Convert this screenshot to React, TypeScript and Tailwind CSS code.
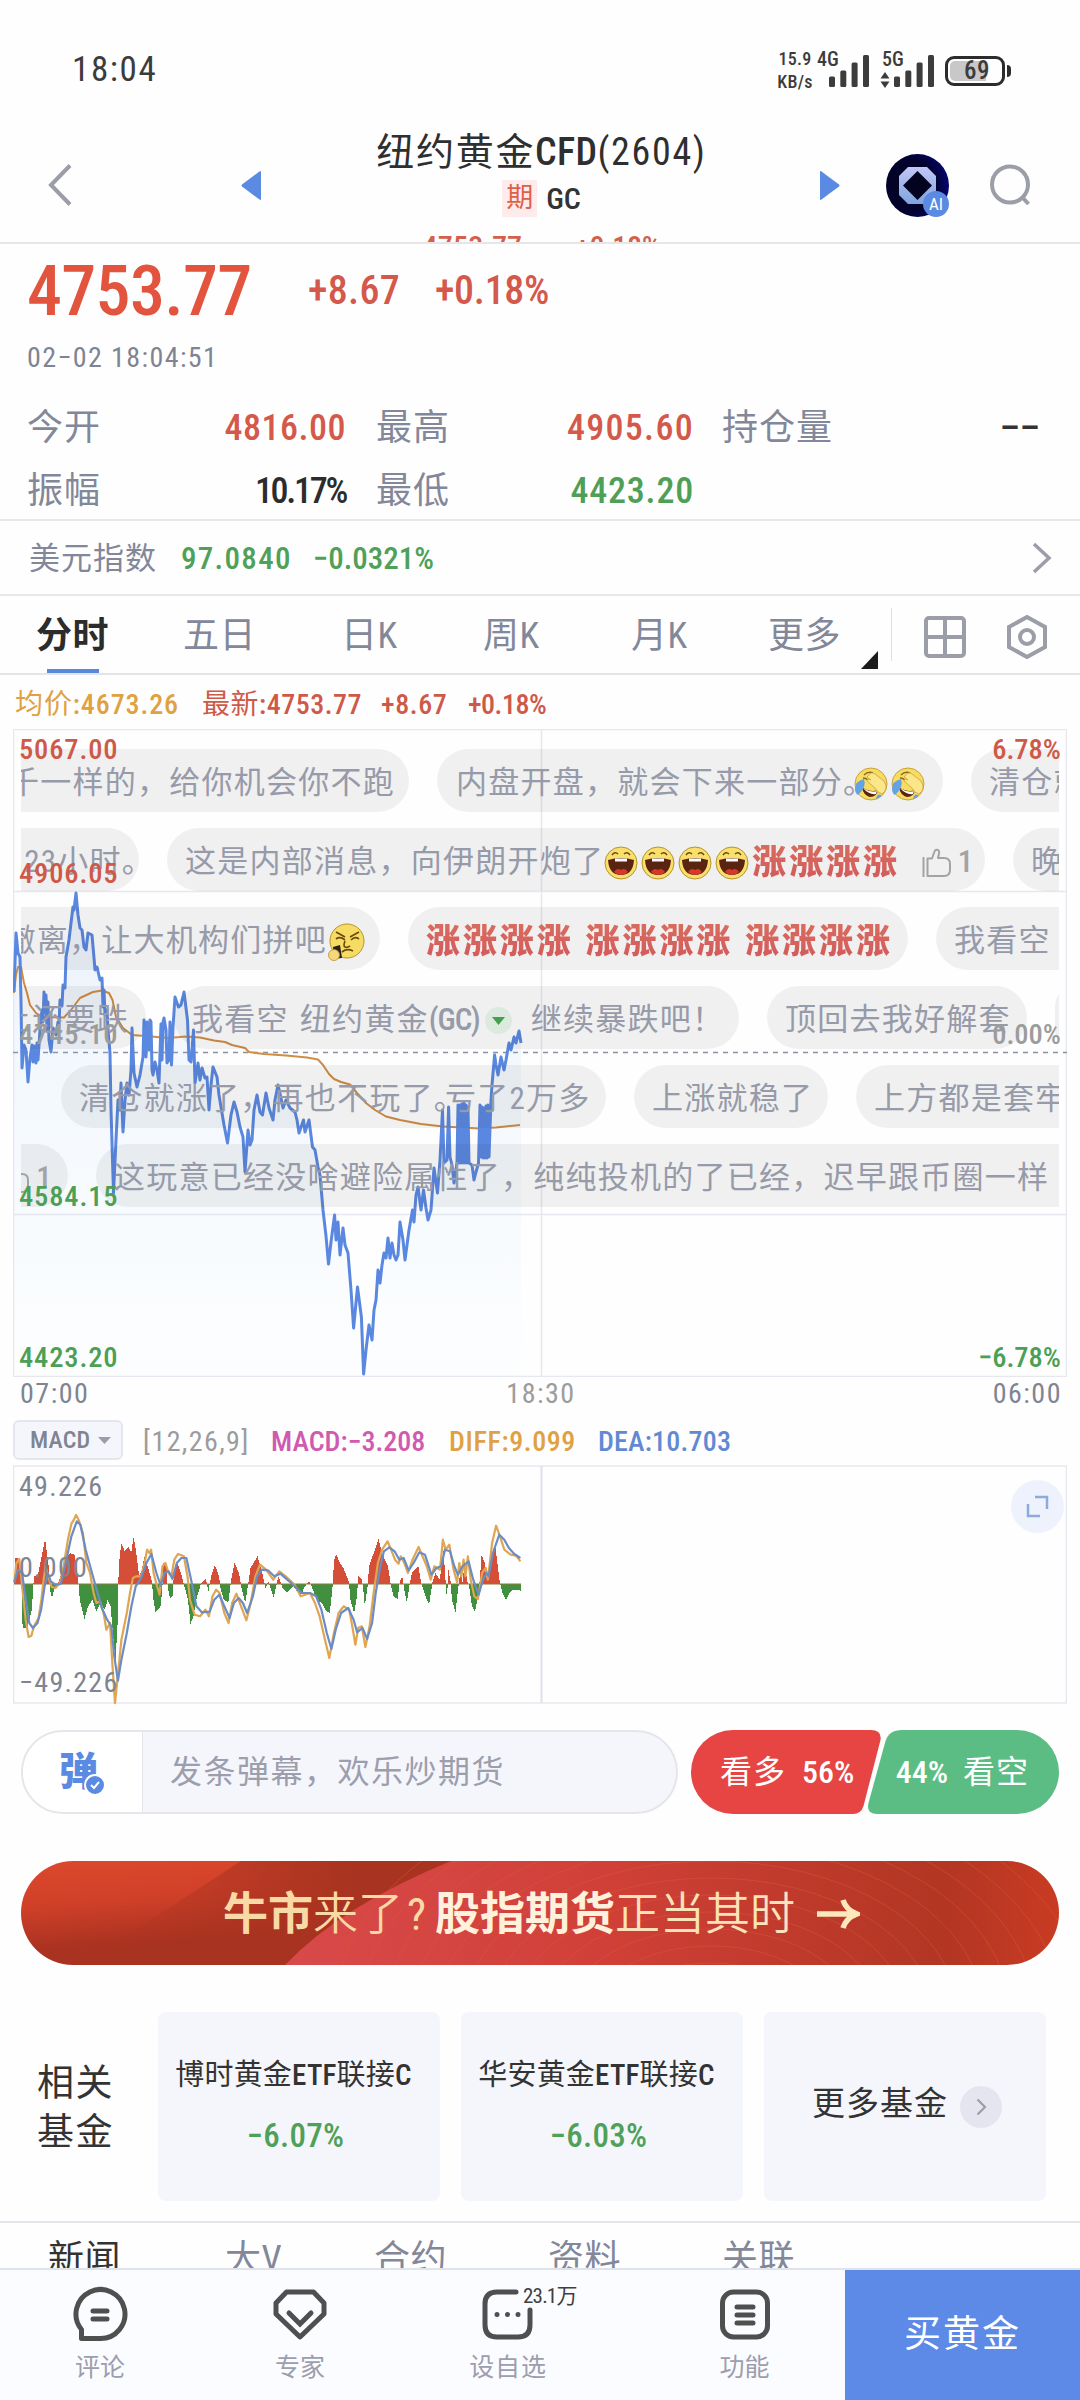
import { Fragment, type ReactNode } from 'react';
import clsx from 'clsx';

type Point = [number, number];

const PRICE_POINTS: Point[] = [
  [14, 992], [16, 933], [18, 953], [20, 957], [21, 1003], [22, 1068], [24, 1045], [26, 1050], [28, 1082], [30, 1058],
  [32, 1045], [33, 1062], [34, 1046], [36, 1063], [37, 1043], [38, 1060], [40, 1030], [42, 1010], [43, 1022], [44, 992],
  [45, 1012], [46, 995], [47, 1030], [48, 1002], [49, 1040], [51, 1052], [53, 1028], [56, 1035], [58, 1022], [59, 1025],
  [60, 1000], [62, 1006], [63, 985], [65, 988], [66, 957], [69, 940], [71, 923], [73, 907], [74, 910], [76, 893],
  [78, 915], [80, 928], [82, 930], [84, 947], [86, 950], [88, 933], [92, 935], [94, 958], [95, 970], [97, 967],
  [100, 980], [102, 978], [103, 1007], [104, 990], [105, 1015], [107, 1010], [108, 1030], [110, 1053], [111, 1110],
  [113.5, 1193], [116, 1140], [118, 1100], [120, 1110], [121, 1083], [123, 1132], [125, 1100], [127, 1083],
  [129, 1095], [131, 1070], [132, 1028], [134, 1073], [137, 1087], [140, 1075], [143, 1057], [144, 1020], [146, 1057],
  [147, 1022], [149, 1050], [150, 1020], [151, 1022], [152, 1070], [153, 1075], [155, 1062], [157, 1070], [159, 1083],
  [161, 1024], [162, 1060], [163, 1022], [164, 1018], [166, 1030], [167, 1063], [169, 1060], [170, 1022], [171.5, 1065],
  [173, 1027], [175, 997], [177, 1003], [178.5, 1007], [181, 1005], [184, 992], [186, 1008], [187.5, 1020], [189, 1060],
  [191, 1062], [193.5, 1030], [195, 1083], [198, 1063], [200, 1080], [202, 1068], [205, 1078], [207, 1077],
  [209, 1110], [211, 1085], [213, 1067], [217, 1077], [219, 1095], [221, 1107], [224, 1125], [227.5, 1143], [231, 1115],
  [234, 1102], [237, 1112], [240, 1127], [243, 1137], [245, 1172], [248, 1130], [250, 1145], [252, 1140], [254, 1110],
  [257, 1095], [260, 1112], [262.5, 1115], [266, 1093], [269, 1108], [273, 1120], [275, 1100], [278, 1085],
  [281, 1098], [283, 1108], [286, 1100], [290, 1108], [295, 1112], [297, 1120], [299, 1133], [303.5, 1120], [305, 1132],
  [309, 1120], [312.5, 1147], [315, 1150], [318, 1167], [320, 1175], [323, 1210], [326, 1236], [328.5, 1264],
  [331, 1242], [334.6, 1215], [336, 1240], [338, 1222], [340, 1255], [343, 1228], [345, 1245], [348, 1253],
  [351, 1290], [353.6, 1328], [357.5, 1287], [361.4, 1317], [363.6, 1374], [366, 1350], [369, 1325], [372, 1340],
  [374, 1310], [376, 1300], [378, 1270], [380, 1283], [382, 1265], [384, 1253], [386, 1258], [388, 1238], [390, 1258],
  [392, 1243], [394, 1255], [396, 1260], [398, 1255], [400, 1222], [403, 1240], [405, 1260], [409, 1230], [412.5, 1210],
  [414, 1222], [416, 1195], [418, 1187], [421, 1210], [423.5, 1190], [426, 1208], [428, 1220], [431, 1210], [434, 1168],
  [437.5, 1193], [440, 1160], [442.5, 1110], [444, 1163], [447, 1160], [448.6, 1107], [450, 1157], [452, 1165],
  [454, 1183], [457, 1163], [458, 1105], [459, 1163], [460, 1105], [461, 1163], [462, 1104], [463, 1163], [464, 1103],
  [465, 1163], [466, 1105], [467, 1163], [468, 1107], [469, 1163], [472, 1165], [474, 1180], [476, 1172],
  [478.5, 1163], [480, 1105], [481, 1157], [482, 1107], [483, 1158], [484, 1108], [485, 1158], [486, 1106],
  [487, 1158], [488, 1105], [489, 1157], [491, 1100], [492, 1085], [494.6, 1055], [496, 1065], [498, 1075], [501, 1057],
  [504, 1070], [506, 1060], [509, 1043], [511, 1050], [514, 1037], [516, 1043], [519, 1031], [521, 1043],
];

const AVERAGE_POINTS: Point[] = [
  [14, 993], [16, 975], [18, 967], [21, 967], [24, 983], [27, 993], [30, 1005], [36, 1013], [43, 1017], [64, 1017.5],
  [71, 1010], [80, 998], [93, 992], [102, 990.5], [109, 993], [112.5, 1000], [116, 1017], [123, 1028], [132, 1035],
  [146, 1036], [168, 1038], [186, 1036.5], [200, 1037.5], [214, 1040.5], [225, 1042], [232, 1045], [245, 1048],
  [249, 1052], [264, 1054], [286, 1055.5], [307, 1057.5], [318, 1059.5], [323, 1065], [329, 1074], [334, 1079],
  [341, 1082], [350, 1084.5], [357, 1093], [366, 1103], [375, 1110], [386, 1116.5], [400, 1120], [421, 1124],
  [443, 1126.5], [479, 1128.5], [496, 1127.5], [520, 1125],
];

// MACD series use a denser grid than the screen: 2.8 units per px across, 3 per px down
const DIFF_POINTS: Point[] = [
  [40, 548], [46, 490], [54, 478], [62, 560], [72, 660], [80, 712], [88, 708], [95, 680], [108, 655], [116, 600],
  [122, 540], [128, 500], [134, 530], [145, 562], [155, 565], [168, 550], [178, 500], [190, 420], [200, 372], [207, 360],
  [213, 346], [220, 360], [232, 400], [242, 490], [252, 520], [262, 580], [270, 610], [280, 605], [290, 640], [298, 690],
  [308, 670], [314, 780], [322, 910], [328, 850], [340, 720], [355, 640], [364, 580], [372, 535], [382, 530], [395, 530],
  [405, 490], [412, 450], [418, 460], [423, 450], [430, 520], [440, 560], [447, 585], [455, 500], [463, 490], [472, 520],
  [480, 530], [488, 480], [498, 463], [515, 470], [525, 530], [532, 600], [545, 645], [560, 650], [575, 630], [585, 650],
  [595, 590], [605, 570], [615, 580], [628, 640], [640, 670], [650, 610], [662, 582], [675, 620], [690, 662], [702, 610],
  [715, 530], [728, 495], [745, 510], [765, 540], [782, 515], [800, 530], [825, 555], [842, 590], [868, 580], [882, 610],
  [895, 650], [910, 720], [922, 775], [935, 700], [948, 640], [962, 620], [978, 630], [988, 690], [995, 735], [1003, 685],
  [1013, 680], [1023, 742], [1035, 680], [1046, 580], [1058, 490], [1070, 450], [1085, 425], [1095, 450], [1106, 480],
  [1116, 492], [1122, 470], [1132, 490], [1142, 520], [1155, 480], [1172, 442], [1183, 470], [1195, 500], [1206, 540],
  [1216, 500], [1232, 510], [1240, 420], [1248, 450], [1258, 435], [1270, 510], [1280, 548], [1286, 490], [1292, 530],
  [1298, 480], [1303, 530], [1310, 470], [1318, 540], [1328, 590], [1338, 598], [1350, 520], [1360, 505], [1366, 540],
  [1378, 430], [1389, 378], [1400, 410], [1412, 450], [1430, 465], [1445, 468], [1457, 485],
];

const DEA_POINTS: Point[] = [
  [40, 548], [50, 510], [62, 520], [72, 600], [82, 670], [92, 685], [105, 670], [115, 630], [125, 560], [134, 520],
  [142, 545], [155, 555], [170, 553], [182, 500], [200, 410], [215, 365], [225, 375], [240, 450], [255, 510], [268, 560],
  [285, 625], [300, 660], [312, 680], [320, 770], [330, 843], [340, 780], [355, 700], [368, 620], [380, 560], [395, 535],
  [410, 490], [424, 463], [438, 520], [450, 558], [460, 520], [472, 515], [483, 538], [495, 490], [508, 475], [522, 475],
  [535, 540], [550, 620], [565, 638], [587, 636], [600, 600], [614, 585], [628, 620], [643, 655], [655, 610], [668, 595],
  [680, 610], [692, 640], [708, 590], [720, 530], [733, 510], [750, 512], [768, 530], [785, 522], [810, 545], [845, 580],
  [868, 580], [885, 590], [900, 630], [915, 700], [928, 748], [940, 690], [955, 640], [975, 625], [990, 660], [1000, 698],
  [1015, 685], [1028, 718], [1042, 670], [1052, 580], [1065, 500], [1075, 455], [1090, 443], [1105, 455], [1118, 480],
  [1130, 475], [1144, 512], [1158, 490], [1174, 458], [1190, 465], [1208, 525], [1222, 505], [1235, 500], [1246, 450],
  [1260, 455], [1272, 500], [1282, 525], [1295, 500], [1312, 485], [1325, 540], [1340, 585], [1352, 540], [1362, 520],
  [1368, 530], [1380, 460], [1398, 405], [1412, 420], [1425, 445], [1440, 463], [1457, 475],
];

const HISTOGRAM: Point[] = [
  [38, 540], [42, 475], [50, 475], [57, 520], [59, 553], [62, 685], [75, 685], [88, 630], [92, 553], [94, 530], [105, 525],
  [115, 470], [125, 418], [135, 500], [138, 570], [144, 595], [150, 570], [160, 555], [168, 530], [180, 480], [195, 460],
  [208, 465], [218, 550], [222, 600], [235, 658], [245, 620], [258, 600], [268, 635], [280, 610], [292, 630], [300, 600],
  [308, 620], [315, 700], [322, 785], [328, 670], [331, 500], [338, 430], [348, 455], [358, 440], [366, 460], [373, 410],
  [380, 460], [388, 530], [396, 510], [403, 470], [412, 500], [424, 545], [428, 600], [434, 638], [448, 620], [453, 570],
  [456, 490], [465, 500], [468, 560], [475, 597], [482, 590], [485, 530], [495, 490], [508, 530], [515, 560], [525, 600],
  [532, 672], [540, 650], [548, 600], [562, 550], [575, 538], [582, 575], [590, 530], [600, 495], [612, 530], [615, 560],
  [625, 600], [638, 608], [645, 545], [655, 490], [668, 520], [674, 560], [685, 610], [694, 550], [700, 505], [720, 470],
  [735, 530], [742, 565], [750, 545], [765, 593], [778, 530], [790, 565], [802, 578], [820, 560], [840, 590], [852, 560],
  [865, 545], [875, 570], [885, 600], [900, 610], [912, 635], [922, 640], [930, 560], [934, 480], [940, 463], [950, 490],
  [960, 505], [975, 545], [980, 600], [990, 642], [998, 590], [1002, 530], [1010, 535], [1015, 560], [1020, 620],
  [1028, 560], [1032, 500], [1045, 460], [1058, 418], [1068, 460], [1085, 500], [1092, 550], [1100, 590], [1112, 597],
  [1118, 545], [1125, 530], [1132, 580], [1138, 608], [1146, 550], [1152, 520], [1170, 500], [1178, 550], [1190, 590],
  [1200, 615], [1210, 545], [1218, 520], [1230, 540], [1240, 450], [1250, 600], [1254, 510], [1260, 545], [1264, 600],
  [1274, 638], [1282, 560], [1288, 510], [1294, 550], [1300, 480], [1306, 540], [1312, 560], [1320, 620], [1328, 637],
  [1337, 590], [1342, 540], [1347, 465], [1356, 490], [1362, 540], [1375, 470], [1386, 445], [1397, 540], [1405, 580],
  [1415, 600], [1425, 580], [1435, 570], [1458, 573],
];

const ZERO = 553;
const toPolyline = (points: Point[]) => points.map(([x, y]) => `${x},${y}`).join(' ');
const toScreen = (points: Point[]): Point[] =>
  points.map(([x, y]) => [Number((x / 2.8 - 13).toFixed(1)), Number(((y - 196) / 3).toFixed(1))]);

// One bar per pixel column, split by sign
const histogramBars = (sign: 'up' | 'down') => {
  const points = toScreen(HISTOGRAM);
  const zero = (ZERO - 196) / 3;
  const bars: string[] = [];
  for (let i = 0; i < points.length - 1; i++) {
    const [x0, y0] = points[i];
    const [x1, y1] = points[i + 1];
    for (let x = Math.ceil(x0); x < x1; x++) {
      const y = y0 + ((y1 - y0) * (x - x0)) / (x1 - x0);
      if (sign === 'up' ? y < zero : y > zero) {
        bars.push(`M${x + 0.5} ${zero}V${Math.round(y)}`);
      }
    }
  }
  return bars.join('');
};

function SignalBars() {
  return (
    <svg className="h-8 w-10" viewBox="0 0 40 32" fill="#3c3c3c">
      <rect x="0" y="21.5" width="6" height="10.5" rx="1.5" />
      <rect x="11.3" y="15.5" width="6" height="16.5" rx="1.5" />
      <rect x="22.6" y="7.5" width="6" height="24.5" rx="1.5" />
      <rect x="34" y="0" width="6" height="32" rx="1.5" />
    </svg>
  );
}

function StatusBar() {
  return (
    <div className="flex h-[128px] items-center justify-between pt-[13px] pr-[69px] pl-[72px] text-[#3c3c3c]">
      <span className="text-[35px] tracking-[1.6px]">18:04</span>
      <div className="flex items-center">
        <div className="flex w-[34px] flex-col items-center text-[18px] leading-[22.5px] font-medium">
          <span className="tracking-[0.3px]">15.9</span>
          <span className="tracking-[0.3px]">KB/s</span>
        </div>
        <div className="relative ml-[17px]">
          <span className="absolute -top-[6px] -left-[12px] text-[20px] leading-5 font-medium">4G</span>
          <SignalBars />
        </div>
        <div className="relative ml-[25px]">
          <span className="absolute -top-[6px] -left-[12px] text-[20px] leading-5 font-medium">5G</span>
          <svg className="absolute top-[17px] -left-[14px] h-4 w-[10px]" viewBox="0 0 10 16" fill="#3c3c3c">
            <path d="M5 0 9.5 6.5H.5zM5 16 .5 9.5h9z" />
          </svg>
          <SignalBars />
        </div>
        <div className="relative ml-[11px] flex h-[30px] w-[60px] items-center justify-center rounded-[9px] border-[3px] border-[#2c2c2c] p-[2px]">
          <div className="absolute top-[2px] left-[2px] h-5 w-[36px] rounded-l-[5px] bg-[#c8c8c8]" />
          <span className="relative pl-1 text-[25px] leading-6 font-medium tracking-[0.5px]">69</span>
        </div>
        <div className="ml-[2px] h-[12px] w-1 rounded-r-full bg-[#2c2c2c]" />
      </div>
    </div>
  );
}

function Header() {
  return (
    <div className="flex h-[116px] items-center overflow-hidden border-b-2 border-[#e6e6e8] pr-[48px]">
      <svg className="ml-[48px] h-[42px] w-[24px] shrink-0" viewBox="0 0 24 42" fill="none" stroke="#9b9da7" strokeWidth="4">
        <path d="M22 1.5 3 21l19 19.5" />
      </svg>
      <svg className="ml-[169px] h-[29px] w-[20px] shrink-0" viewBox="0 0 20 29" fill="#5b8ae2">
        <path d="M20 1v27q0 1.500-1.500.5L1 15.500q-1-1 0-2L18.500.5Q20-.5 20 1z" />
      </svg>
      <div className="flex h-full flex-1 flex-col items-center pl-[2px]">
        <h1 className="h-12 text-[38px] leading-[49px] font-normal tracking-[1.700px] whitespace-nowrap text-[#2f2f2f]">
          纽约黄金<span className="font-medium tracking-[0.3px]">CFD</span>(2604)
        </h1>
        <div className="flex h-11 shrink-0 items-center gap-[9px] pt-px">
          <span className="flex h-[37px] w-[35px] items-center justify-center bg-[#fdeceb] text-[27px] text-[#de5f4a]">期</span>
          <span className="text-[30px] font-medium text-[#333]">GC</span>
        </div>
        <div className="flex h-[52px] shrink-0 items-center gap-[53px] text-[30px] font-medium text-[#d3604c]">
          <span className="tracking-[0.2px]">4753.77</span>
          <span className="-tracking-[0.3px]">+0.18%</span>
        </div>
      </div>
      <svg className="h-[29px] w-[20px] shrink-0" viewBox="0 0 20 29" fill="#5b8ae2">
        <path d="M0 1v27q0 1.500 1.500.5L19 15.500q1-1 0-2L1.500.5Q0-.5 0 1z" />
      </svg>
      <div className="relative ml-[46px] h-[63px] w-[63px] shrink-0">
        <svg className="h-full w-full" viewBox="0 0 63 63">
          <defs>
            <radialGradient id="orb" cx="0.35" cy="0.5" r="0.7">
              <stop offset="0" stopColor="#05051f" />
              <stop offset="0.6" stopColor="#02022e" />
              <stop offset="1" stopColor="#06067c" />
            </radialGradient>
            <linearGradient id="gem" x1="0" y1="0" x2="0" y2="1">
              <stop offset="0" stopColor="#c2c6f7" />
              <stop offset="1" stopColor="#7fa4df" />
            </linearGradient>
          </defs>
          <circle cx="31.500" cy="31.500" r="31.500" fill="url(#orb)" />
          <path d="M22 13h19l9 9v19l-9 9H22l-9-9V22z" fill="url(#gem)" />
          <path d="M31.500 17 46 31.500 31.500 46 17 31.500z" fill="#03031f" />
        </svg>
        <span className="absolute right-0 bottom-0 flex h-[26px] w-[26px] items-center justify-center rounded-full bg-[#5b8ae2] text-[17px] leading-4 text-white">
          AI
        </span>
      </div>
      <svg className="ml-[41px] h-[42px] w-[42px] shrink-0" viewBox="0 0 42 42" fill="none" stroke="#9b9da7" strokeWidth="4">
        <circle cx="20" cy="20.500" r="18" />
        <path d="m32 33 6.500 7" />
      </svg>
    </div>
  );
}

function Quote() {
  return (
    <div className="h-[277px] border-b-2 border-[#e8e8ea] pl-[27px] text-[#d4594a]">
      <div className="flex h-[92px] items-center pt-[2px]">
        <span className="w-[281px] text-[70px] leading-[92px] font-medium -tracking-[0.700px] text-[#e3543e]">4753.77</span>
        <span className="w-[127px] text-[40px] font-medium tracking-[0.300px]">+8.67</span>
        <span className="text-[40px] font-medium -tracking-[0.300px]">+0.18%</span>
      </div>
      <div className="flex h-[44px] items-center text-[28px] tracking-[1.400px] text-[#7f8492]">02−02 18:04:51</div>
      <div className="mt-[17px] grid grid-cols-[319px_30px_318px_28px_318px] text-[36px] leading-[63px]">
        <Stat label="今开" value="4816.00" tone="tracking-[0.500px]" />
        <span />
        <Stat label="最高" value="4905.60" tone="tracking-[1.300px]" />
        <span />
        <Stat label="持仓量" value="––" tone="text-[#333]" />
        <Stat label="振幅" value="10.17%" tone="-tracking-[2.300px] text-[#2c2c2c]" />
        <span />
        <Stat label="最低" value="4423.20" tone="tracking-[0.800px] text-[#4f9f57]" />
      </div>
    </div>
  );
}

function Stat({ label, value, tone }: { label: string; value: string; tone: string }) {
  return (
    <div className="flex justify-between">
      <span className="tracking-[1px] text-[#82879a]">{label}</span>
      <span className={clsx('font-medium', tone)}>{value}</span>
    </div>
  );
}

function DollarIndex() {
  return (
    <div className="flex h-[75px] items-center border-b-2 border-[#e8e8ea] pt-[3px] pr-[28px] pl-[29px] text-[31px] font-medium text-[#4fa058]">
      <span className="w-[152px] font-normal tracking-[1px] text-[#82879a]">美元指数</span>
      <span className="w-[132px] tracking-[1.300px]">97.0840</span>
      <span>−0.0321%</span>
      <svg className="mb-[3px] ml-auto h-[32px] w-5" viewBox="0 0 20 32" fill="none" stroke="#9b9da7" strokeWidth="3.500">
        <path d="m2 2 15 14L2 30" />
      </svg>
    </div>
  );
}

const PERIODS = [
  { label: '分时', width: 'w-[147px]', active: true },
  { label: '五日', width: 'w-[158px]' },
  { label: '日K', width: 'w-[142px]' },
  { label: '周K', width: 'w-[148px]' },
  { label: '月K', width: 'w-[137px]' },
  { label: '更多', width: 'w-[124px]' },
];

function PeriodTabs() {
  return (
    <div className="flex h-[79px] border-b-2 border-[#e3e4e8] pl-9 text-[36px] tracking-[0.600px] text-[#82879a]">
      {PERIODS.map(({ label, width, active }) => (
        <div key={label} className={clsx('flex flex-col', width, active && 'font-bold text-[#2c2c2c]')}>
          <span className="h-[73px] leading-[81px]">{label}</span>
          {active && <span className="ml-[11px] h-[5px] w-[52px] bg-[#5c86d8]" />}
        </div>
      ))}
      <svg className="mt-[55px] -ml-[31px] h-[18px] w-[17px]" viewBox="0 0 17 18" fill="#1c1c1c">
        <path d="M17 0v18H0z" />
      </svg>
      <div className="mt-[12px] ml-[13px] h-[53px] w-px bg-[#dedfe4]" />
      <svg className="mt-[20px] ml-8 h-[44px] w-[42px]" viewBox="0 0 42 44" fill="none" stroke="#9b9da7" strokeWidth="4">
        <rect x="2" y="2" width="38" height="38" rx="3" />
        <path d="M21 2v38M2 21h38" />
      </svg>
      <svg className="mt-[18px] ml-[40px] h-[46px] w-[42px]" viewBox="0 0 42 46" fill="none" stroke="#9b9da7" strokeWidth="4">
        <path d="m21 3 18 10v20L21 43 3 33V13z" />
        <circle cx="21" cy="23" r="7" />
      </svg>
    </div>
  );
}

function Averages() {
  return (
    <div className="flex h-[54px] items-center pt-[6px] pl-[15px] text-[28px] leading-[48px] font-medium whitespace-nowrap text-[#cf5948]">
      <span className="w-[187px] tracking-[0.900px] text-[#dfa142]">
        <span className="font-normal">均价</span>:4673.26
      </span>
      <span className="w-[179px] tracking-[0.500px]">
        <span className="font-normal">最新</span>:4753.77
      </span>
      <span className="w-[87px] tracking-[0.600px]">+8.67</span>
      <span className="-tracking-[0.500px]">+0.18%</span>
    </div>
  );
}

function LaughTears() {
  return (
    <svg className="mr-[3px] h-[34px] w-[34px] shrink-0" viewBox="0 0 34 34">
      <circle cx="17" cy="17" r="16" fill="#f8dc62" stroke="#c9a23a" />
      <path d="M8 20q8 6 16 3-1 7-8 7-7-2-8-10z" fill="#5a2410" />
      <path d="M9 21q7 5 14 3l-1 3q-7 1-13-6z" fill="#fff" />
      <path d="M1 22q0-8 9-10 3 8-6 16-3-2-3-6zM22 32q1-6 5-4v2z" fill="#63a3e4" />
      <path d="M10 8q4-4 9-2M9 11q3 0 5 2" fill="none" stroke="#8a6a1c" strokeWidth="1.500" />
      <path d="M14 9q3-5 7-2l9 7q5 8-2 13-5-1-7-6l-8-7q0-3 4-1l-4-3z" fill="#fbe68a" stroke="#c9a23a" strokeWidth="0.800" />
    </svg>
  );
}

function BigLaugh() {
  return (
    <svg className="mr-[3px] h-[34px] w-[34px] shrink-0" viewBox="0 0 34 34">
      <circle cx="17" cy="17" r="16" fill="#f9e06c" stroke="#b8922c" />
      <path d="M8 9q3-4 6-1M20 8q3-3 6 1" fill="none" stroke="#6b4a12" strokeWidth="1.500" />
      <path d="M4 14q13-4 26 0-1 15-13 15T4 14z" fill="#5a2410" />
      <path d="M11 12.500h12v3H11z" fill="#fff" />
      <path d="M10 26q3-5 7-2 4-3 7 2-3 3-7 3t-7-3z" fill="#d8382c" />
    </svg>
  );
}

function Grimace() {
  return (
    <svg className="h-[38px] w-[38px] shrink-0" viewBox="0 0 38 38">
      <circle cx="20" cy="18" r="17" fill="#f7dc63" stroke="#b8922c" />
      <path d="m9 9 9 5M32 9l-9 5M9 16q4-3 9 1M32 16q-4-3-8 1M18 18q-2 5 0 6t5-1M15 29q5-4 11-1" fill="none" stroke="#6b4a12" strokeWidth="1.700" />
      <path d="m6 24 7-2 2 13-8 1z" fill="#2b2118" />
      <circle cx="7" cy="32" r="5.500" fill="#f7d77a" stroke="#b8922c" strokeWidth="0.800" />
    </svg>
  );
}

function ThumbUp() {
  return (
    <svg className="h-[30px] w-[30px] shrink-0" viewBox="0 0 30 30" fill="none" stroke="#a3a3a3" strokeWidth="2" strokeLinejoin="round">
      <path d="M1.500 9v20M5.500 28V10.500h4.500l2.500-7q1-2.500 3.500-1.500 1.500 1 1 3.500l-1 4.500h6q6 0 6 6v6q0 6-6 6z" />
    </svg>
  );
}

function Rise({ children }: { children: ReactNode }) {
  return (
    <span className="bg-linear-to-b from-[#d9705f] to-[#d2555a] bg-clip-text text-[34px] font-black tracking-[2.900px] text-transparent">
      {children}
    </span>
  );
}

function Stop() {
  return <span className="-mr-[21px]">。</span>;
}

function Chip({ width, edge, children }: { width: string; edge?: 'left' | 'right'; children?: ReactNode }) {
  return (
    <div
      className={clsx(
        'flex h-[63px] shrink-0 items-center overflow-hidden bg-black/[0.055] pt-[6px] whitespace-nowrap',
        edge === 'left' ? 'justify-end rounded-r-full' : 'rounded-l-full pl-[18px]',
        !edge && 'rounded-r-full',
        width,
      )}
    >
      {children}
    </div>
  );
}

function Danmaku() {
  return (
    <div className="absolute inset-x-[8px] top-[20px] flex flex-col gap-4 overflow-hidden text-[31px] tracking-[1.250px] text-[#969aa9]">
      <div className="flex gap-7">
        <Chip width="w-[388px] pr-[14px]" edge="left">千一样的，给你机会你不跑</Chip>
        <Chip width="w-[506px]">
          <span className="ml-px">内盘开盘，就会下来一部分</span>
          <Stop />
          <LaughTears />
          <LaughTears />
        </Chip>
        <Chip width="w-[89px]" edge="right">清仓就</Chip>
      </div>
      <div className="flex gap-7">
        <Chip width="w-[118px]" edge="left">23小时<Stop /><span className="w-[6px] shrink-0" /></Chip>
        <Chip width="w-[818px]">
          这是内部消息，向伊朗开炮了
          {[0, 1, 2, 3].map((i) => (
            <BigLaugh key={i} />
          ))}
          <Rise>涨涨涨涨</Rise>
          <span className="w-[22px]" />
          <ThumbUp />
          <span className="ml-[6px] font-medium text-[#a3a3a3]">1</span>
        </Chip>
        <Chip width="w-[47px]" edge="right">晚</Chip>
      </div>
      <div className="flex gap-7">
        <Chip width="w-[359px] pr-[15px]" edge="left">撤离，让大机构们拼吧<Grimace /></Chip>
        <Chip width="w-[500px]">
          <div className="flex gap-3">
            <Rise>涨涨涨涨</Rise>
            <Rise>涨涨涨涨</Rise>
            <Rise>涨涨涨涨</Rise>
          </div>
        </Chip>
        <Chip width="w-[124px]" edge="right">我看空</Chip>
      </div>
      <div className="flex gap-7">
        <Chip width="w-[125px] pr-[17px]" edge="left">上还要跌</Chip>
        <Chip width="w-[565px]">
          我看空<span className="w-[11px]" />纽约黄金<span className="font-medium -tracking-[1.100px]">(GC)</span>
          <span className="mx-[5px] flex h-[27px] w-[27px] items-center justify-center rounded-full bg-[#dbe9df]">
            <svg className="h-[9px] w-[13px]" viewBox="0 0 13 9" fill="#43a04b">
              <path d="M0 1h13L6.500 9z" />
            </svg>
          </span>
          <span className="w-[14px]" />
          继续暴跌吧！
        </Chip>
        <Chip width="w-[260px]">顶回去我好解套</Chip>
        <Chip width="w-[20px]" edge="right" />
      </div>
      <div className="flex gap-7 pl-[40px]">
        <Chip width="w-[545px]">清仓就涨了，再也不玩了<Stop />亏了2万多</Chip>
        <Chip width="w-[194px]">上涨就稳了</Chip>
        <Chip width="w-[204px]" edge="right">上方都是套牢</Chip>
      </div>
      <div className="flex gap-7">
        <Chip width="w-[47px] pr-[15px]" edge="left">
          <ThumbUp />
          <span className="ml-[6px] font-medium text-[#a3a3a3]">1</span>
        </Chip>
        <Chip width="w-[963px]" edge="right">这玩意已经没啥避险属性了，纯纯投机的了已经，迟早跟币圈一样</Chip>
      </div>
    </div>
  );
}

const PRICE_LABELS = [
  { price: '5067.00', percent: '6.78%', gap: 'h-[124px]', tone: 'text-[#cf5948]' },
  { price: '4906.05', gap: 'h-[161px]', tone: 'text-[#cf5948]' },
  { price: '4745.10', percent: '0.00%', gap: 'h-[162px]', tone: 'text-[#9c9c9c]' },
  { price: '4584.15', gap: 'h-[161px]', tone: 'text-[#4c9f55]' },
  { price: '4423.20', percent: '−6.78%', gap: 'h-[38px]', tone: 'text-[#4c9f55]' },
];

function PriceChart() {
  const line = toPolyline(PRICE_POINTS);
  return (
    <div className="relative mx-[13px] h-[648px] w-[1054px]">
      <svg className="absolute inset-0 h-full w-full" viewBox="13 729 1054 648" fill="none">
        <defs>
          <linearGradient id="fade" x1="0" y1="890" x2="0" y2="1376" gradientUnits="userSpaceOnUse">
            <stop offset="0" stopColor="#5b8ae2" stopOpacity="0.12" />
            <stop offset="0.35" stopColor="#8fc4f8" stopOpacity="0.1" />
            <stop offset="0.75" stopColor="#9fd0fb" stopOpacity="0.06" />
            <stop offset="1" stopColor="#9fd0fb" stopOpacity="0.01" />
          </linearGradient>
        </defs>
        <path d="M13.500 729.500h1053v647h-1053zM13 891.500h1054M13 1214.500h1054M541.500 729v648" stroke="#e7e8ef" strokeWidth="1.500" />
        <path d="M13 1052.500h1054" stroke="#8d90a0" strokeWidth="1.500" strokeDasharray="5 5" />
        <polygon points={`14,1376 ${line} 521,1376`} fill="url(#fade)" />
        <polyline points={toPolyline(AVERAGE_POINTS)} stroke="#d08d45" strokeWidth="2" strokeLinejoin="round" />
        <polyline points={line} stroke="#5a88e0" strokeWidth="3" strokeLinejoin="round" />
      </svg>
      <Danmaku />
      <div className="relative flex flex-col px-[6px] text-[28.500px] leading-[42px] font-medium">
        {PRICE_LABELS.map(({ price, percent, gap, tone }) => (
          <div key={price} className={clsx('flex justify-between', gap, tone)}>
            <span className="tracking-[0.850px]">{price}</span>
            <span>{percent}</span>
          </div>
        ))}
      </div>
    </div>
  );
}

function MacdChart() {
  return (
    <div className="px-[13px]">
      <div className="grid h-[42px] grid-cols-3 items-center pr-[5px] pb-[8px] pl-[7px] text-[28px] leading-[34px] tracking-[1.500px] text-[#7f8492]">
        <span>07:00</span>
        <span className="text-center text-[#9c9c9c]">18:30</span>
        <span className="text-right">06:00</span>
      </div>
      <div className="flex h-[46px] items-center text-[28px] font-medium whitespace-nowrap">
        <div className="mb-1 flex h-10 w-[110px] items-center rounded-md border-2 border-[#e4e6ee] bg-[#f5f6fb] pl-[15px] text-[24px] tracking-[0.200px] text-[#7f8492]">
          MACD
          <svg className="ml-2 h-[7px] w-[13px]" viewBox="0 0 13 7" fill="#9a9eac">
            <path d="M0 0h13L6.500 7z" />
          </svg>
        </div>
        <span className="w-[126px] pl-[20px] font-normal tracking-[1.400px] text-[#9c9c9c]">[12,26,9]</span>
        <span className="w-[177px] pl-[22px] text-[#d05ab0]">MACD:−3.208</span>
        <span className="w-[150px] pl-[23px] tracking-[0.600px] text-[#dfa142]">DIFF:9.099</span>
        <span className="pl-[22px] tracking-[0.200px] text-[#6289d2]">DEA:10.703</span>
      </div>
      <div className="relative h-[239px] w-[1054px]">
        <svg className="absolute inset-0 h-full w-full" viewBox="0 0 1054 239" fill="none">
          <path d="M.5 1h1053v237H.5z" stroke="#e7e8ef" strokeWidth="1.500" />
          <path d="M528.500 1v237" stroke="#dfe0ea" strokeWidth="2" />
          <path d={histogramBars('up')} stroke="#d54e38" shapeRendering="crispEdges" />
          <path d={histogramBars('down')} stroke="#40903f" shapeRendering="crispEdges" />
          <path d="M1 119h507" stroke="#8a7a3c" strokeWidth="1" />
          <polyline points={toPolyline(toScreen(DIFF_POINTS))} stroke="#dfa550" strokeWidth="2.200" strokeLinejoin="round" />
          <polyline points={toPolyline(toScreen(DEA_POINTS))} stroke="#6b8cc4" strokeWidth="2.200" strokeLinejoin="round" />
        </svg>
        <div className="relative flex h-full flex-col px-[6px] text-[28px] leading-[43px] tracking-[1.300px] text-[#7f8492]">
          <span className="h-[82px]">49.226</span>
          <span className="h-[117px]">0.000</span>
          <span>−49.226</span>
        </div>
        <div className="absolute top-[15px] right-[3px] flex h-[53px] w-[53px] items-center justify-center rounded-full bg-[#edf2fc]">
          <svg className="h-[23px] w-[23px]" viewBox="0 0 23 23" fill="none" stroke="#8eaadd" strokeWidth="2.500">
            <path d="M9 2h12v12M2 9v12h12" />
          </svg>
        </div>
      </div>
    </div>
  );
}

function DanmakuBar() {
  return (
    <div className="mt-[26px] flex h-[84px] gap-[13px] px-[21px]">
      <div className="flex w-[657px] overflow-hidden rounded-full border-2 border-[#e5e6eb] bg-[#f5f6fb]">
        <div className="relative flex w-[120px] items-center justify-center border-r border-[#e5e6eb] bg-white pr-2">
          <span className="text-[39px] font-black text-[#5b8ae2]">弹</span>
          <svg className="absolute top-[42px] left-[61px] h-[22px] w-[22px]" viewBox="0 0 22 22">
            <circle cx="11" cy="11" r="10" fill="#5b8ae2" stroke="#fff" strokeWidth="2" />
            <path d="m7 11 3 3 5-6" fill="none" stroke="#fff" strokeWidth="2" />
          </svg>
        </div>
        <span className="flex items-center pl-[27px] text-[32px] tracking-[1.500px] text-[#9c9ead]">发条弹幕，欢乐炒期货</span>
      </div>
      <div className="relative flex flex-1 items-center justify-between pr-[30px] pl-[29px] text-[32px] font-medium text-white">
        <svg className="absolute inset-0 h-full w-full" viewBox="0 0 368 84">
          <path d="M42 0h138q11 0 9.500 10l-17 66q-2.500 8-10.500 8H42a42 42 0 0 1 0-84z" fill="#e64543" />
          <path d="M211 0h115a42 42 0 0 1 0 84H186q-11 0-8.500-11l17-62Q198 0 211 0z" fill="#5bbd83" />
        </svg>
        <span className="relative">
          <span className="mr-[16px] font-normal tracking-[1px]">看多</span>56%
        </span>
        <span className="relative">
          44%<span className="ml-[15px] font-normal tracking-[1px]">看空</span>
        </span>
      </div>
    </div>
  );
}

function Banner() {
  return (
    <div className="relative mx-[21px] mt-[47px] flex h-[104px] items-center justify-center overflow-hidden rounded-full">
      <svg className="absolute inset-0 h-full w-full" viewBox="0 0 1038 104" preserveAspectRatio="none">
        <defs>
          <linearGradient id="base" x1="0" y1="0" x2="0.3" y2="1">
            <stop offset="0" stopColor="#dc482c" />
            <stop offset="0.4" stopColor="#d04029" />
            <stop offset="0.8" stopColor="#a93220" />
          </linearGradient>
          <linearGradient id="shade" x1="0" y1="0" x2="1" y2="0">
            <stop offset="0" stopColor="#a83320" stopOpacity="0" />
            <stop offset="0.7" stopColor="#a83320" />
          </linearGradient>
          <linearGradient id="sheet" x1="0" y1="0" x2="1" y2="0">
            <stop offset="0" stopColor="#d8494a" />
            <stop offset="0.4" stopColor="#d14038" />
            <stop offset="0.85" stopColor="#b23623" />
            <stop offset="1" stopColor="#c93b22" />
          </linearGradient>
        </defs>
        <rect width="440" height="104" fill="url(#base)" />
        <path d="M220 0h230L270 104H60z" fill="url(#shade)" />
        <path d="M430 0h608v104H264Q320 45 430 0z" fill="url(#sheet)" />
        <g fill="none" stroke="#dc5a3c" strokeOpacity="0.450">
          {[0, 1, 2, 3, 4, 5, 6, 7, 8, 9, 10, 11].map((i) => (
            <ellipse key={i} cx="690" cy="150" rx={90 + i * 26} ry={48 + i * 17} />
          ))}
        </g>
      </svg>
      <div className="relative flex items-center pt-[2px] pl-[3px] text-[45px] leading-none text-[#f9d9a6]">
        <span className="font-bold">牛市</span>
        <span className="font-[350]">来了</span>
        <span className="mr-[9px] ml-1 font-normal">?</span>
        <span className="font-bold text-[#fff1dc]">股指期货</span>
        <span className="font-[350] text-[#fbe2bb]">正当其时</span>
        <svg className="ml-[22px] h-[32px] w-[43px]" viewBox="0 0 43 32" fill="none" stroke="#fde7bd" strokeWidth="5.500">
          <path d="M0 16h40M26 2q3 10 14 14-11 4-14 14" />
        </svg>
      </div>
    </div>
  );
}

const FUNDS = [
  { name: '博时黄金ETF联接C', change: '−6.07%' },
  { name: '华安黄金ETF联接C', change: '−6.03%' },
];

function RelatedFunds() {
  return (
    <div className="mt-[47px] flex h-[211px] border-b-2 border-[#e3e5ea] text-[#333]">
      <div className="flex w-[158px] flex-col justify-center pb-[18px] pl-[37px] text-[37px] leading-[49px] tracking-[1.500px]">
        <span>相关</span>
        <span>基金</span>
      </div>
      <div className="flex h-[189px] gap-[21px]">
        {FUNDS.map(({ name, change }) => (
          <div key={name} className="flex w-[282px] flex-col items-center rounded-lg bg-[#f5f6fb] pt-[39px] pr-[11px]">
            <span className="h-12 text-[29px] leading-[48px] tracking-[0.200px] whitespace-nowrap">
              {name.split(/([A-Z]+)/).map((part, i) => (
                <Fragment key={i}>{/[A-Z]/.test(part) ? <span className="font-medium">{part}</span> : part}</Fragment>
              ))}
            </span>
            <span className="mt-[12px] pl-1 text-[33px] leading-[50px] font-medium tracking-[0.300px] text-[#4fa058]">{change}</span>
          </div>
        ))}
        <div className="flex w-[282px] items-center justify-center gap-3 rounded-lg bg-[#f5f6fb] pl-1">
          <span className="pb-[5px] text-[33px] tracking-[1px]">更多基金</span>
          <span className="flex h-[42px] w-[42px] items-center justify-center rounded-full bg-[#e5e5f0]">
            <svg className="h-[18px] w-[11px]" viewBox="0 0 11 18" fill="none" stroke="#9c9dab" strokeWidth="2.200">
              <path d="m1.500 1.500 7.500 7.500-7.500 7.500" />
            </svg>
          </span>
        </div>
      </div>
    </div>
  );
}

function NewsTabs() {
  return (
    <div className="flex h-[45px] overflow-hidden pl-12 text-[36px] leading-[72px] tracking-[0.500px] text-[#82879a]">
      <span className="w-[177px] text-[#333]">新闻</span>
      <span className="w-[149px]">大V</span>
      <span className="w-[174px]">合约</span>
      <span className="w-[174px]">资料</span>
      <span>关联</span>
    </div>
  );
}

function BottomNav() {
  return (
    <div className="flex h-[132px] border-t-2 border-[#dfe4ec] bg-[#fbfcff] text-[25px] text-[#9c9ead]">
      <div className="flex w-[200px] flex-col items-center pt-4">
        <svg className="h-[56px] w-[56px]" viewBox="0 0 56 56" fill="none" stroke="#4f4f4f" strokeWidth="5">
          <path d="M9.500 52.500V43.500A24.500 24.500 0 1 1 28 52.500z" strokeLinejoin="round" />
          <path d="M21 25h14M21 33h14" strokeLinecap="round" />
        </svg>
        <span className="mt-[8px] leading-9">评论</span>
      </div>
      <div className="flex w-[200px] flex-col items-center pt-4">
        <svg className="h-[56px] w-[56px]" viewBox="0 0 56 56" fill="none" stroke="#4f4f4f" strokeWidth="5">
          <path d="M14.500 6h27L52 17v11L28 51 4 28V17z" strokeLinejoin="round" />
          <path d="m17 27 11 11 11-11" strokeLinecap="round" />
        </svg>
        <span className="mt-[8px] leading-9">专家</span>
      </div>
      <div className="relative flex w-[216px] flex-col items-center pt-4">
        <svg className="h-[56px] w-[56px]" viewBox="0 0 56 56" fill="none" stroke="#4f4f4f" strokeWidth="5" strokeLinecap="round">
          <path d="M36 6H17Q5 6 5 18v21q0 12 12 12h21q12 0 12-12V24" />
          <path d="M17 28.500h.01M27.500 28.500h.01M38 28.500h.01" />
        </svg>
        <span className="absolute top-[12px] left-[123px] text-[21px] leading-7 -tracking-[0.800px] text-[#3f3f3f]">23.1万</span>
        <span className="mt-[8px] leading-9 tracking-[0.800px]">设自选</span>
      </div>
      <div className="flex w-[229px] flex-col items-center pt-4 pl-[28px]">
        <svg className="h-[56px] w-[56px]" viewBox="0 0 56 56" fill="none" stroke="#4f4f4f" strokeWidth="5">
          <rect x="5.500" y="6" width="45" height="45" rx="11" />
          <path d="M20 21h16M20 29h16M20 37h16" strokeLinecap="round" />
        </svg>
        <span className="mt-[8px] leading-9">功能</span>
      </div>
      <button className="flex-1 bg-[#5c8ae6] text-[37px] tracking-[2px] text-white">买黄金</button>
    </div>
  );
}

export default function App() {
  return (
    <div className="flex h-[2400px] w-[1080px] flex-col overflow-hidden bg-[#fefefe] font-['Roboto','Noto_Sans_CJK_SC',sans-serif] [font-stretch:85%]">
      <StatusBar />
      <Header />
      <Quote />
      <DollarIndex />
      <PeriodTabs />
      <Averages />
      <PriceChart />
      <MacdChart />
      <DanmakuBar />
      <Banner />
      <RelatedFunds />
      <NewsTabs />
      <BottomNav />
    </div>
  );
}
